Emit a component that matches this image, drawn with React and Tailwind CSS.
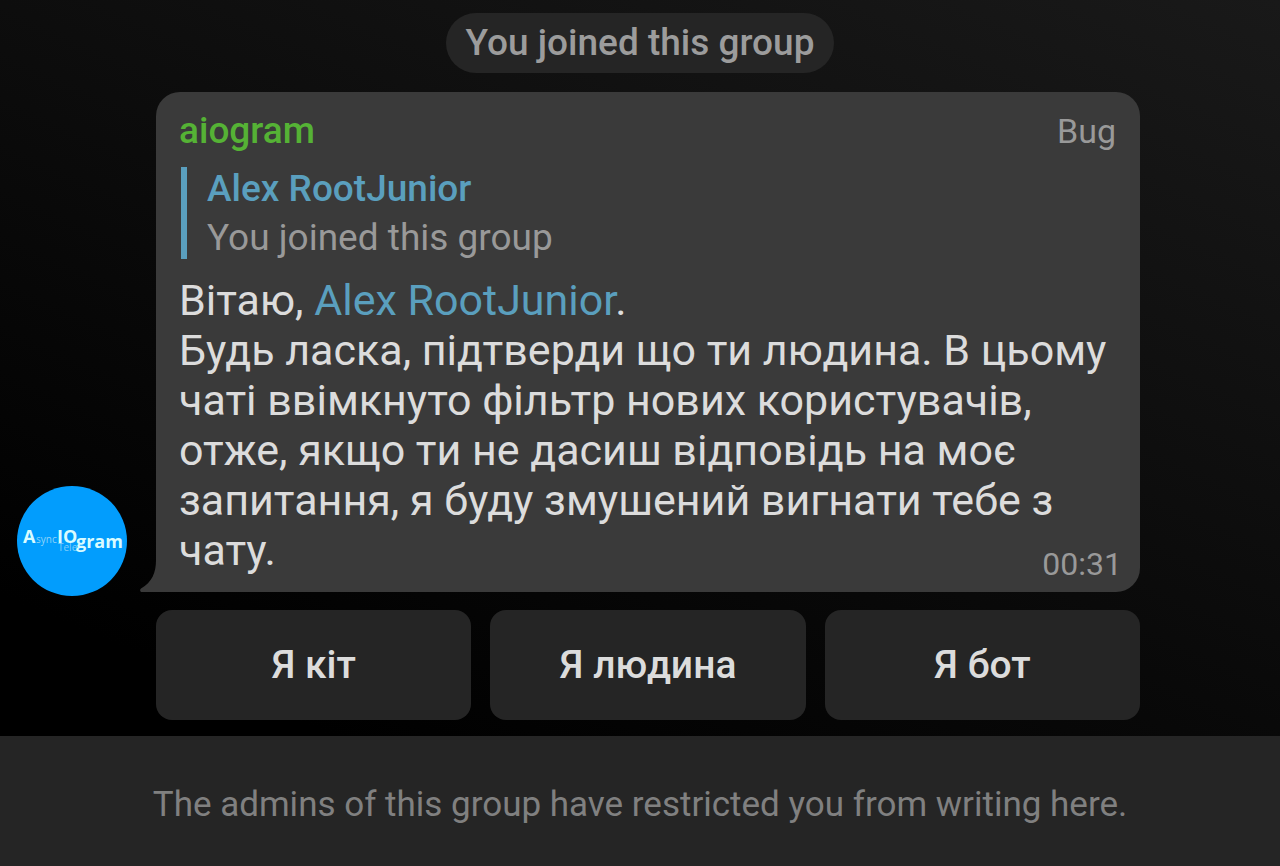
import React from 'react'

const ANSWERS = ['Я кіт', 'Я людина', 'Я бот']

function Avatar() {
  return (
    <svg
      viewBox="0 0 110 110"
      role="img"
      aria-label="aiogram"
      className="-mb-1 size-[110px] shrink-0 font-['Open_Sans',sans-serif]"
    >
      <circle cx="55" cy="55" r="55" fill="#029dfd" />
      <text x="19" y="57" fontSize="10" fill="#8fd3fa">sync</text>
      <text x="41" y="65" fontSize="10" fill="#7fcdfb">Tele</text>
      <g fill="#d9fbff" fontWeight="700">
        <text x="6" y="57" fontSize="18">A</text>
        <text x="40" y="57" fontSize="18">IO</text>
        <text x="59" y="62" fontSize="18">gram</text>
      </g>
    </svg>
  )
}

function ReplyQuote({ author, text }) {
  return (
    <div className="mt-3.5 ml-0.5 border-l-6 border-[#5a9fbe] pl-5">
      <p className="text-[37px] leading-11 font-medium text-[#5a9fbe]">{author}</p>
      <p className="pt-1.5 text-[37px] leading-[42px] text-[#999999]">{text}</p>
    </div>
  )
}

function Bubble() {
  return (
    <article className="relative min-w-0 flex-1 rounded-3xl rounded-bl-none bg-[#3a3a3a] pt-[17px] pr-6 pb-2 pl-[23px]">
      {/* Tail pointing at the avatar */}
      <svg viewBox="0 0 17 32" className="absolute bottom-0 -left-4 h-8 w-[17px]" aria-hidden="true">
        <path d="M17 0H16C16 13 12 22 1 28.500C-0.500 29.500 0 32 2 32H17Z" fill="#3a3a3a" />
      </svg>

      <header className="flex items-center justify-between">
        <span className="text-[37px] leading-11 font-medium text-[#55b235]">aiogram</span>
        <span className="text-[34px] leading-11 text-[#999999]">Bug</span>
      </header>

      <ReplyQuote author="Alex RootJunior" text="You joined this group" />

      <div className="mt-4 flow-root text-[43px] leading-[50px] text-[#dcdcdc]">
        Вітаю, <a href="#alex" className="text-[#5a9fbe]">Alex RootJunior</a>.
        <br />
        Будь ласка, підтверди що ти людина. В цьому чаті ввімкнуто фільтр нових
        користувачів, отже, якщо ти не дасиш відповідь на моє запитання, я буду
        змушений вигнати тебе з чату.
        <time className="float-right mt-[19px] -mr-1.5 text-[32px] leading-10 text-[#999999]">00:31</time>
      </div>
    </article>
  )
}

export default function App() {
  return (
    <div className="flex min-h-screen flex-col bg-black font-[Roboto,'Noto_Sans',sans-serif]">
      <main className="flex-1 bg-linear-[23deg] from-black from-11% to-[#191919] pt-[13px] pb-4">
        <div className="flex justify-center">
          <p className="rounded-full bg-[#252525] px-5 text-[37px] leading-[60px] font-medium text-[#9c9c9c]">
            You joined this group
          </p>
        </div>

        <div className="mt-[19px] flex items-end gap-[29px] pr-35 pl-[17px]">
          <Avatar />
          <Bubble />
        </div>

        <div className="mt-[18px] grid grid-cols-3 gap-[19px] pr-35 pl-[156px]">
          {ANSWERS.map((answer) => (
            <button
              key={answer}
              type="button"
              className="h-[110px] rounded-2xl bg-[#252525] text-[39px] font-medium text-[#dcdcdc]"
            >
              {answer}
            </button>
          ))}
        </div>
      </main>

      <footer className="bg-[#252525] px-6 pt-12 pb-10 text-center text-[35px] leading-[42px] text-[#808080]">
        The admins of this group have restricted you from writing here.
      </footer>
    </div>
  )
}
